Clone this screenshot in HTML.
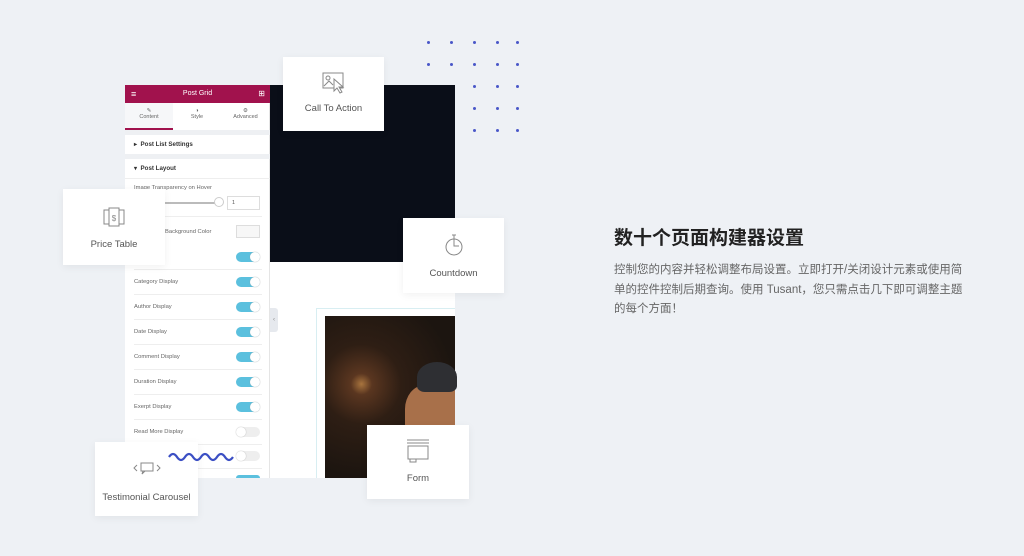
<!DOCTYPE html>
<html><head><meta charset="utf-8"><style>
*{margin:0;padding:0;box-sizing:border-box}
body{width:1024px;height:556px;background:#eef1f5;position:relative;overflow:hidden;font-family:"Liberation Sans","Noto Sans CJK SC",sans-serif}
.abs{position:absolute}
.card{position:absolute;background:#fff;box-shadow:0 2px 8px rgba(0,0,0,.06);text-align:center;color:#555;font-size:9.5px}
.card svg{display:block;margin:0 auto}
.dot{position:absolute;width:3px;height:3px;border-radius:50%;background:#4a57c8}
.row{position:absolute;left:134px;width:128px;font-size:5.8px;color:#666;border-bottom:1px solid #eee;height:25px;line-height:24px}
.tg{position:absolute;right:2px;top:7px;width:24px;height:10px;border-radius:5px;background:#5bc0de}
.tg:after{content:"";position:absolute;right:0;top:0;width:10px;height:10px;border-radius:50%;background:#fff;box-shadow:0 0 1px #999}
.tg.off{background:#eee}
.tg.off:after{left:0;right:auto}
</style></head><body>
<div class="dot" style="left:427px;top:41px"></div><div class="dot" style="left:450px;top:41px"></div><div class="dot" style="left:473px;top:41px"></div><div class="dot" style="left:496px;top:41px"></div><div class="dot" style="left:516px;top:41px"></div>
<div class="dot" style="left:427px;top:63px"></div><div class="dot" style="left:450px;top:63px"></div><div class="dot" style="left:473px;top:63px"></div><div class="dot" style="left:496px;top:63px"></div><div class="dot" style="left:516px;top:63px"></div>
<div class="dot" style="left:473px;top:85px"></div><div class="dot" style="left:496px;top:85px"></div><div class="dot" style="left:516px;top:85px"></div>
<div class="dot" style="left:473px;top:107px"></div><div class="dot" style="left:496px;top:107px"></div><div class="dot" style="left:516px;top:107px"></div>
<div class="dot" style="left:473px;top:129px"></div><div class="dot" style="left:496px;top:129px"></div><div class="dot" style="left:516px;top:129px"></div>

<div class="abs" style="left:270px;top:85px;width:185px;height:393px;background:#fff"></div>
<div class="abs" style="left:270px;top:85px;width:185px;height:177px;background:#0a0e18"></div>
<div class="abs" style="left:316px;top:308px;width:139px;height:170px;border:1px solid #d8eef2;border-right:none;border-bottom:none"></div>
<div class="abs" style="left:325px;top:316px;width:130px;height:162px;background:radial-gradient(circle at 28% 42%,#a8743e 0,#5a3620 8%,#2e1e14 30%,#1c1510 70%)"></div>
<div class="abs" style="left:405px;top:385px;width:50px;height:60px;background:#a8704a;border-radius:40% 0 0 0"></div>
<div class="abs" style="left:417px;top:362px;width:40px;height:30px;border-radius:50% 50% 20% 20%;background:#2e2f33"></div>
<div class="abs" style="left:270px;top:308px;width:8px;height:24px;background:#e6e9ee;border-radius:0 3px 3px 0;font-size:6px;color:#888;text-align:center;line-height:24px">‹</div>

<div class="abs" style="left:125px;top:85px;width:145px;height:393px;background:#fff;border-right:1px solid #e5e5e5"></div>
<div class="abs" style="left:125px;top:85px;width:145px;height:18px;background:#a1124d;color:#fff;font-size:7px;line-height:18px;text-align:center">Post Grid
<span style="position:absolute;left:6px;font-size:9px">≡</span><span style="position:absolute;right:5px;font-size:8px">⊞</span></div>
<div class="abs" style="left:125px;top:103px;width:145px;height:27px;font-size:5.5px;color:#666">
<div class="abs" style="left:0;width:48px;height:27px;text-align:center;padding-top:5px;background:#f6f7f9;border-bottom:2px solid #a1124d">✎<br>Content</div>
<div class="abs" style="left:48px;width:48px;text-align:center;padding-top:5px">◑<br>Style</div>
<div class="abs" style="left:96px;width:49px;text-align:center;padding-top:5px">⚙<br>Advanced</div></div>
<div class="abs" style="left:125px;top:130px;width:145px;height:5px;background:#eef0f3"></div>
<div class="abs" style="left:134px;top:141px;font-size:6.2px;color:#333;font-weight:bold">▸ &nbsp;Post List Settings</div>
<div class="abs" style="left:125px;top:154px;width:145px;height:5px;background:#eef0f3"></div>
<div class="abs" style="left:134px;top:165px;font-size:6.2px;color:#333;font-weight:bold">▾ &nbsp;Post Layout</div>
<div class="abs" style="left:125px;top:178px;width:145px;height:1px;background:#eee"></div>
<div class="abs" style="left:134px;top:185px;font-size:5.8px;color:#666">Image Transparency on Hover</div>
<div class="abs" style="left:160px;top:202px;width:58px;height:2px;background:#bbb"></div>
<div class="abs" style="left:214px;top:197px;width:10px;height:10px;border-radius:50%;background:#fff;border:1px solid #ccc"></div>
<div class="abs" style="left:227px;top:196px;width:33px;height:14px;border:1px solid #ddd;font-size:5.5px;padding:3px 4px;color:#555">1</div>
<div class="abs" style="left:134px;top:216px;width:128px;height:1px;background:#eee"></div>
<div class="abs" style="left:165px;top:229px;font-size:5.8px;color:#666">Background Color</div>
<div class="abs" style="left:236px;top:225px;width:24px;height:13px;border:1px solid #ddd;background:#f7f7f7"></div>
<div class="row" style="top:245px"><div class="tg"></div></div>
<div class="row" style="top:270px">Category Display<div class="tg"></div></div>
<div class="row" style="top:295px">Author Display<div class="tg"></div></div>
<div class="row" style="top:320px">Date Display<div class="tg"></div></div>
<div class="row" style="top:345px">Comment Display<div class="tg"></div></div>
<div class="row" style="top:370px">Duration Display<div class="tg"></div></div>
<div class="row" style="top:395px">Exerpt Display<div class="tg"></div></div>
<div class="row" style="top:420px">Read More Display<div class="tg off"></div></div>
<div class="row" style="top:444px"><div class="tg off"></div></div>
<div class="abs" style="left:236px;top:475px;width:24px;height:3px;background:#5bc0de;border-radius:3px 3px 0 0"></div>

<div class="card" style="left:283px;top:57px;width:101px;height:74px;padding-top:14px">
<svg width="26" height="24" viewBox="0 0 26 24" fill="none" stroke="#888" stroke-width="1"><rect x="2" y="2" width="20" height="15"/><circle cx="7" cy="7" r="2"/><path d="M3 15l5-5 4 4"/><path d="M13 8l0 12 3-3 3 5 2-1-3-5 4 0z" fill="#fff"/></svg>
<div style="margin-top:8px">Call To Action</div></div>
<div class="card" style="left:63px;top:189px;width:102px;height:76px;padding-top:17px">
<svg width="24" height="22" viewBox="0 0 24 22" fill="none" stroke="#888" stroke-width="1"><rect x="2" y="4" width="5" height="14"/><rect x="17" y="4" width="5" height="14"/><rect x="7" y="2" width="10" height="18" fill="#fff"/><text x="12" y="15" font-size="8" text-anchor="middle" fill="#888" stroke="none">$</text></svg>
<div style="margin-top:11px">Price Table</div></div>
<div class="card" style="left:403px;top:218px;width:101px;height:75px;padding-top:15px">
<svg width="24" height="24" viewBox="0 0 24 24" fill="none" stroke="#888" stroke-width="1"><circle cx="12" cy="14" r="8"/><path d="M10 2h4M12 2v4M12 6v7h5"/></svg>
<div style="margin-top:11px">Countdown</div></div>
<div class="card" style="left:367px;top:425px;width:102px;height:74px;padding-top:13px">
<svg width="26" height="26" viewBox="0 0 26 26" fill="none" stroke="#888" stroke-width="1"><path d="M2 2h22M2 5h22"/><rect x="3" y="8" width="20" height="13"/><rect x="5" y="21" width="6" height="3"/></svg>
<div style="margin-top:9px">Form</div></div>
<div class="card" style="left:95px;top:442px;width:103px;height:74px;padding-top:18px">
<svg width="28" height="16" viewBox="0 0 28 16" fill="none" stroke="#888" stroke-width="1"><path d="M4 5l-3 3 3 3M24 5l3 3-3 3"/><rect x="8" y="3" width="12" height="8"/><path d="M10 11l-1 3 3-3"/></svg>
<div style="margin-top:16px">Testimonial Carousel</div></div>
<svg class="abs" style="left:168px;top:450px" width="70" height="14" viewBox="0 0 70 14" fill="none" stroke="#3b4fc4" stroke-width="2.2"><path d="M1 7q4-6 8 0t8 0 8 0 8 0 8 0 8 0 8 0 8 0"/></svg>

<div class="abs" style="left:614px;top:223px;font-size:19px;font-weight:bold;color:#222">数十个页面构建器设置</div>
<div class="abs" style="left:614px;top:261px;width:358px;font-size:11.5px;line-height:19.5px;color:#666">控制您的内容并轻松调整布局设置。立即打开/关闭设计元素或使用简<br>单的控件控制后期查询。使用 Tusant，您只需点击几下即可调整主题<br>的每个方面！</div>
</body></html>
